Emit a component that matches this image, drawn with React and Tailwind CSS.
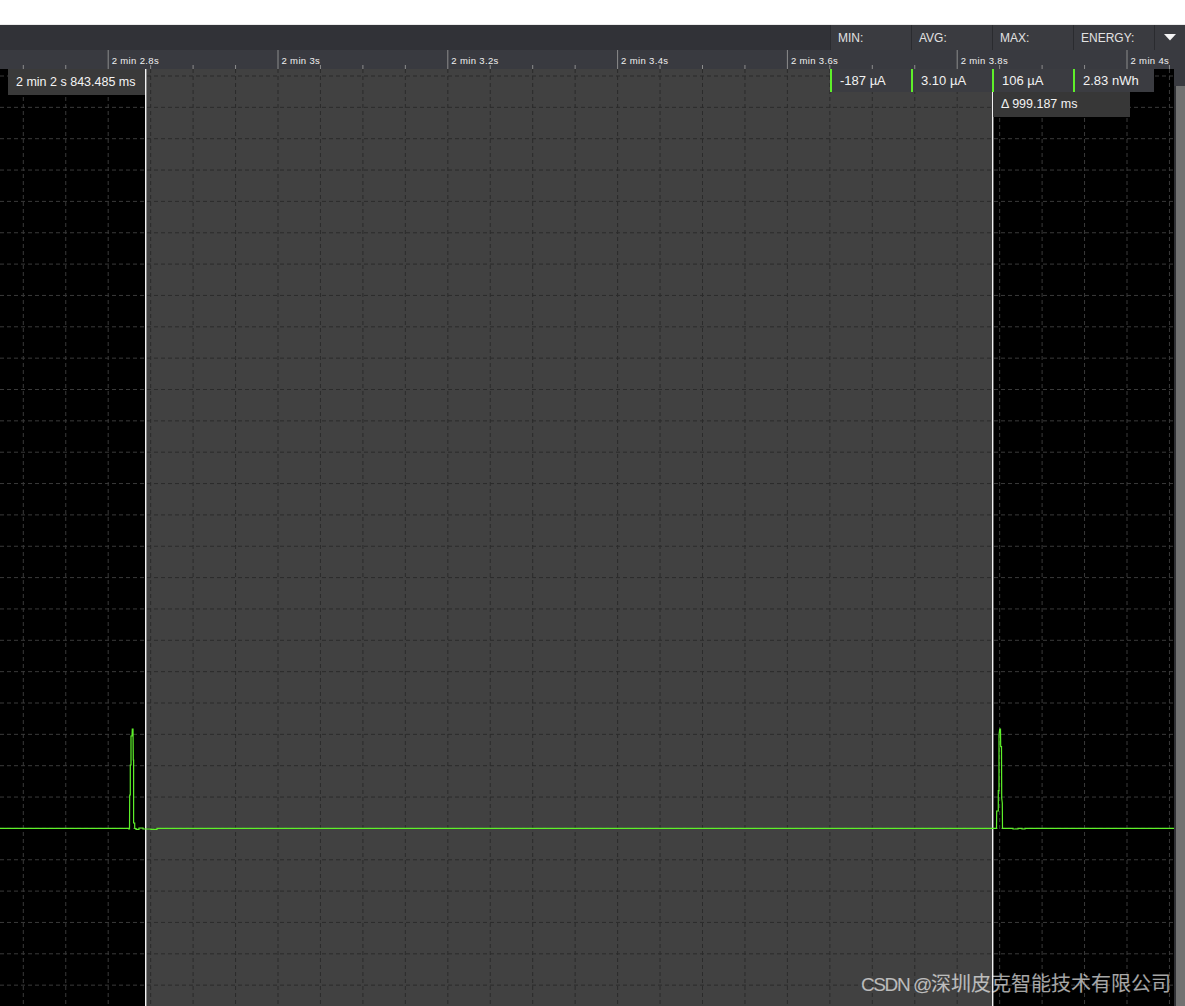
import React from 'react';

const GREEN = '#5ef02a';
const PLOT_W = 1174;
const PLOT_H = 937;
const TOP = 69;

// grid geometry, taken from the reference
const X0 = 23.3;
const DX = 42.45;
const Y0 = 7;
const DY = 31.35;

const gridX = Array.from({ length: 28 }, (_, k) => X0 + k * DX);
const gridY = Array.from({ length: 30 }, (_, j) => Y0 + j * DY);

const majorLabels = {
  2: '2 min 2.8s',
  6: '2 min 3s',
  10: '2 min 3.2s',
  14: '2 min 3.4s',
  18: '2 min 3.6s',
  22: '2 min 3.8s',
  26: '2 min 4s',
};

const SEL_L = 145;
const SEL_R = 992;

// trace points in page coords
const trace = [
  [0, 828.3], [128.5, 828.3], [128.7, 829], [129.5, 829], [129.7, 795], [130.3, 795],
  [130.3, 765], [131, 765], [131, 736], [132, 736], [132.3, 729], [133, 729],
  [133.3, 760], [133.6, 760], [133.6, 823], [134.7, 823], [134.7, 828.5], [136, 828.5],
  [136, 829.3], [139, 829.3], [139, 828], [143, 828], [143, 829], [151, 829],
  [151, 829.3], [157, 829.3], [157, 828.3], [996.5, 828.3], [996.7, 811], [998.3, 811],
  [998.3, 790.7], [999, 790.7], [999, 735], [999.7, 729], [1000.5, 729], [1000.7, 746.7],
  [1001.5, 746.7], [1001.7, 798], [1002.3, 803], [1002.5, 828.3], [1013, 828.3],
  [1013, 829], [1018, 829], [1018, 828.3], [1022, 828.3], [1022, 829], [1025, 829],
  [1025, 828.3], [PLOT_W, 828.3],
];

const stats = [
  { label: 'MIN:', value: '-187 µA' },
  { label: 'AVG:', value: '3.10 µA' },
  { label: 'MAX:', value: '106 µA' },
  { label: 'ENERGY:', value: '2.83 nWh' },
];

const GridLines = ({ color }) => (
  <g stroke={color} strokeWidth="1" strokeDasharray="4 3">
    {gridX.map((x) => (
      <line key={'v' + x} x1={x} y1="0" x2={x} y2={PLOT_H} />
    ))}
    {gridY.map((y) => (
      <line key={'h' + y} x1="0" y1={y} x2={PLOT_W} y2={y} />
    ))}
  </g>
);

const Axis = () => (
  <svg width={PLOT_W} height="19" className="block">
    {gridX.map((x, k) =>
      majorLabels[k] ? (
        <g key={k}>
          <line x1={x} y1="0" x2={x} y2="19" stroke="#8c8c8c" strokeWidth="1" />
          <text
            x={x + 3.5}
            y="13.5"
            fill="#f0f0f0"
            fontSize="9.5"
            letterSpacing="0.35"
            fontFamily="'Liberation Sans', Arial, sans-serif"
          >
            {majorLabels[k]}
          </text>
        </g>
      ) : (
        <line key={k} x1={x} y1="15" x2={x} y2="19" stroke="#8c8c8c" strokeWidth="1" />
      )
    )}
  </svg>
);

const Plot = () => (
  <svg width={PLOT_W} height={PLOT_H} className="block">
    <defs>
      <clipPath id="outside">
        <rect x="0" y="0" width={SEL_L} height={PLOT_H} />
        <rect x={SEL_R} y="0" width={PLOT_W - SEL_R} height={PLOT_H} />
      </clipPath>
      <clipPath id="inside">
        <rect x={SEL_L} y="0" width={SEL_R - SEL_L} height={PLOT_H} />
      </clipPath>
    </defs>
    <rect x="0" y="0" width={PLOT_W} height={PLOT_H} fill="#000" />
    <rect x={SEL_L} y="0" width={SEL_R - SEL_L} height={PLOT_H} fill="#414141" />
    <g clipPath="url(#outside)">
      <GridLines color="#3a3a3a" />
    </g>
    <g clipPath="url(#inside)">
      <GridLines color="#2b2b2b" />
    </g>
    <rect x={SEL_L} y="0" width="1.4" height={PLOT_H} fill="#f2f2f2" />
    <rect x={SEL_R} y="0" width="1.4" height={PLOT_H} fill="#f2f2f2" />
    <polyline
      points={trace.map(([x, y]) => `${x},${y - TOP}`).join(' ')}
      fill="none"
      stroke={GREEN}
      strokeWidth="1.2"
    />
  </svg>
);

export default function App() {
  return (
    <div className="w-[1185px] h-[1006px] bg-white flex flex-col overflow-hidden font-['Liberation_Sans',Arial,sans-serif] text-white">
      <div className="h-[25px] bg-white border-b border-[#ebebeb]" />

      {/* stats header */}
      <div className="h-[25px] bg-[#313237] flex">
        <div className="flex-1" />
        {stats.map((s) => (
          <div key={s.label} className="w-[81px] border-l border-[#2a2b2f] bg-[#3a3b40] pl-[7px] flex items-center text-[12px] text-[#e2e2e2]">
            {s.label}
          </div>
        ))}
        <div className="w-[31px] border-l border-[#2a2b2f] bg-[#3a3b40] flex items-center justify-center">
          <svg width="12" height="7" viewBox="0 0 12 7">
            <path d="M0 0h12L6 6.5z" fill="#f4f4f4" />
          </svg>
        </div>
      </div>

      {/* time axis */}
      <div className="h-[19px] bg-[#393a40]">
        <Axis />
      </div>

      {/* plot */}
      <div className="flex-1 flex relative">
        <div className="w-[1174px]">
          <Plot />
        </div>
        <div className="flex-1 bg-[#303135] flex flex-col">
          <div className="h-[17px] bg-[#393a40]" />
          <div className="flex-1 ml-[2px] bg-[#717171]" />
        </div>

        <div className="absolute left-[8px] top-0 w-[137px] h-[26px] bg-[#3a3a3a] pl-[8px] flex items-center text-[12.5px] text-[#f4f4f4]">
          2 min 2 s 843.485 ms
        </div>

        <div className="absolute left-[830px] top-0 flex">
          {stats.map((s) => (
            <div key={s.value} className="w-[81px] h-[23px] border-l-2 border-[#5ef02a] bg-[#3b3c41] pl-[8px] flex items-center text-[13px] text-[#f2f2f2]">
              {s.value}
            </div>
          ))}
        </div>

        <div className="absolute left-[993px] top-[23px] w-[137px] h-[25px] bg-[#373737] pl-[8px] flex items-center text-[12.5px] text-[#f2f2f2]">
          Δ 999.187 ms
        </div>

        <div className="absolute left-[861px] top-[904px] flex items-baseline text-white/65 leading-none">
          <span className="text-[19px] tracking-[-1.4px]">CSDN @</span>
          <span className="text-[20px] font-['Noto_Sans_CJK_SC',sans-serif]">深圳皮克智能技术有限公司</span>
        </div>
      </div>
    </div>
  );
}
